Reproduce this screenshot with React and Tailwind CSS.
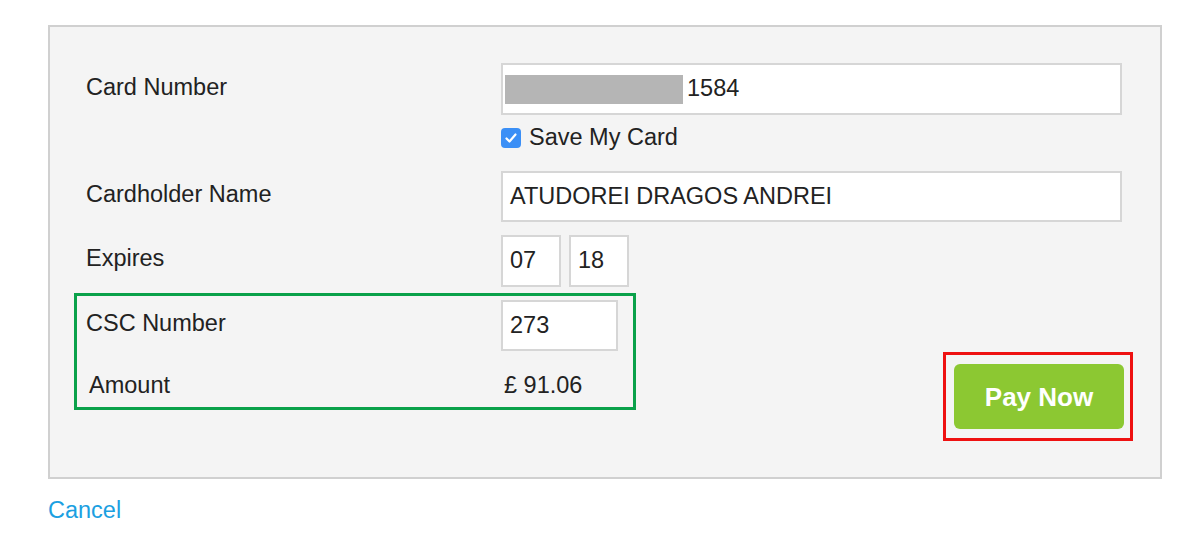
export default function App() {
  const font = { fontFamily: '"Liberation Sans", Arial, Helvetica, sans-serif' };
  return (
    <div className="w-[1200px] h-[547px] bg-white pt-[25px] pl-[48px] text-[#222] text-[23.5px]" style={font}>
      <div className="w-[1114px] h-[454px] border-2 border-[#d0d0d0] bg-[#f4f4f4] pt-[36px]">
        {/* Card number */}
        <div className="flex items-center">
          <div className="w-[451px] pl-[36px] pb-[2px] leading-none">Card Number</div>
          <div className="w-[621px] h-[52px] bg-white border-2 border-[#d6d6d6] flex items-center pl-[2px]">
            <div className="w-[178px] h-[29px] bg-[#b5b5b5]"></div>
            <span className="ml-[4px] leading-none">1584</span>
          </div>
        </div>
        {/* Save card */}
        <div className="flex items-center mt-[13px] pl-[451px] h-[20px]">
          <div className="w-[20px] h-[20px] rounded-[4px] bg-[#3b8ff6] flex items-center justify-center">
            <svg width="14" height="14" viewBox="0 0 14 14">
              <path d="M2.5 7.5 L5.5 10.5 L11.5 3.5" fill="none" stroke="white" strokeWidth="2.2" strokeLinecap="round" strokeLinejoin="round" />
            </svg>
          </div>
          <span className="ml-[8px] leading-none">Save My Card</span>
        </div>
        {/* Cardholder */}
        <div className="flex items-center mt-[23px]">
          <div className="w-[451px] pl-[36px] pb-[4px] leading-none">Cardholder Name</div>
          <div className="w-[621px] h-[51px] bg-white border-2 border-[#d6d6d6] flex items-center pl-[7px] leading-none">
            ATUDOREI DRAGOS ANDREI
          </div>
        </div>
        {/* Expires */}
        <div className="flex items-center mt-[13px]">
          <div className="w-[451px] pl-[36px] pb-[4px] leading-none">Expires</div>
          <div className="w-[60px] h-[52px] bg-white border-2 border-[#d6d6d6] flex items-center pl-[7px] leading-none">07</div>
          <div className="ml-[8px] w-[60px] h-[52px] bg-white border-2 border-[#d6d6d6] flex items-center pl-[7px] leading-none">18</div>
        </div>
        {/* Bottom */}
        <div className="flex items-start mt-[6px]">
          <div className="ml-[24px] w-[562px] h-[117px] border-[3px] border-[#0aa14a] pt-[4px]">
            <div className="flex items-center">
              <div className="w-[424px] pl-[9px] pb-[4px] leading-none">CSC Number</div>
              <div className="w-[117px] h-[51px] bg-white border-2 border-[#d6d6d6] flex items-center pl-[7px] leading-none">273</div>
            </div>
            <div className="flex items-center mt-[23px]">
              <div className="w-[427px] pl-[12px] leading-none">Amount</div>
              <div className="leading-none">£ 91.06</div>
            </div>
          </div>
          <div className="ml-[307px] mt-[59px] w-[190px] h-[89px] border-[3px] border-[#ee1111] pt-[9px] pl-[8px]">
            <div className="w-[170px] h-[65px] rounded-[6px] bg-[#8cc832] flex items-center justify-center text-white font-bold text-[26px] leading-none">
              Pay Now
            </div>
          </div>
        </div>
      </div>
      <div className="mt-[20px] text-[#1ba0e1] text-[23.5px] leading-none">Cancel</div>
    </div>
  );
}
